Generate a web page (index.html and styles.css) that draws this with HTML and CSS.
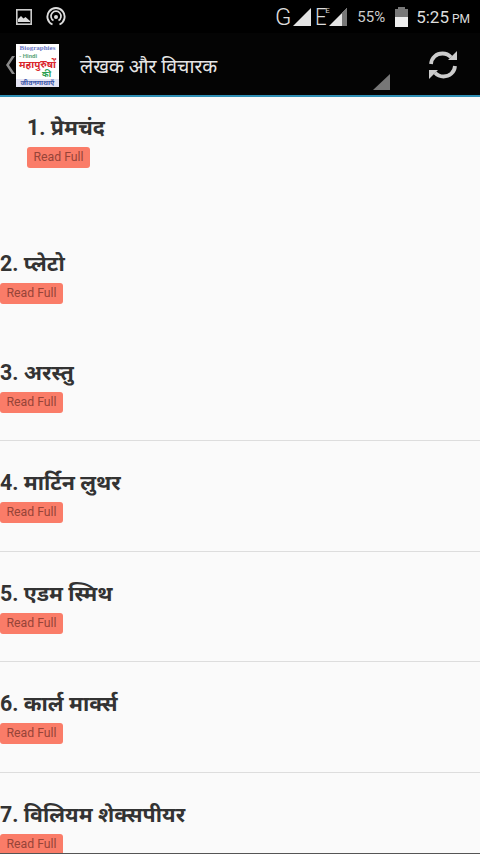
FILE: index.html
```html
<!DOCTYPE html>
<html lang="hi">
<head>
<meta charset="utf-8">
<title>लेखक और विचारक</title>
<link rel="stylesheet" href="styles.css">
</head>
<body>
<div class="status">
  <div class="status-left">
    <svg class="ic-img" viewBox="0 0 16 16"><rect x="0.8" y="0.8" width="14.4" height="14.4" fill="none" stroke="#ccc" stroke-width="1.6"/><path d="M2 13V10L5 7l2.500 2.500L9.500 8 14 12v1z" fill="#ddd"/></svg>
    <svg class="ic-cast" viewBox="0 0 20 20"><path d="M6.500 17.500a8.600 8.600 0 1 1 7 0" fill="none" stroke="#ddd" stroke-width="1.900"/><path d="M7.500 13.500a5 5 0 1 1 5 0" fill="none" stroke="#ddd" stroke-width="1.700"/><circle cx="10" cy="10" r="2" fill="#ddd"/></svg>
  </div>
  <div class="status-right">
    <span class="net">G</span>
    <svg class="sig" viewBox="0 0 18 18"><path d="M0 18 18 0v18z" fill="#e4e4e4"/></svg>
    <span class="net net-e">E</span>
    <span class="net-sup">E</span>
    <svg class="sig sig-e" viewBox="0 0 18 18"><path d="M0 18 18 0v18z" fill="#e4e4e4"/><path d="M13 5 18 0v18h-5z" fill="#777"/></svg>
    <span class="pct">55%</span>
    <div class="batt"><div class="batt-cap"></div><div class="batt-empty"></div><div class="batt-full"></div></div>
    <span class="clock">5:25<span class="ampm"> PM</span></span>
  </div>
</div>
<header class="bar">
  <svg class="back" viewBox="0 0 10 20"><path d="M7 1h3L4 10l6 9H7L1 10z" fill="#8a8a8a"/></svg>
  <div class="logo">
    <span class="logo-a">Biographies</span>
    <span class="logo-b">- Hindi</span>
    <span class="logo-c">महापुरुषों</span>
    <span class="logo-d">की</span>
    <span class="logo-e">जीवनगाथाएँ</span>
  </div>
  <h1 class="title">लेखक और विचारक</h1>
  <div class="spinner-arrow"></div>
  <svg class="refresh" viewBox="0 0 32 32">
    <path d="M4 15C4.500 8.500 9.500 4.500 15.500 4.500c3.500 0 6.300 1.300 8.500 3.700" fill="none" stroke="#ccc" stroke-width="3.800"/>
    <path d="M21 11h9V2z" fill="#ccc"/>
    <path d="M28 17c-.5 6.500-5.500 10.500-11.500 10.500-3.500 0-6.300-1.300-8.500-3.700" fill="none" stroke="#ccc" stroke-width="3.800"/>
    <path d="M11 21H2v9z" fill="#ccc"/>
  </svg>
</header>
<main class="list">
  <section class="item item-first">
    <h2 class="name">1. प्रेमचंद</h2>
    <a class="btn">Read Full</a>
  </section>
  <section class="item item-second">
    <h2 class="name">2. प्लेटो</h2>
    <a class="btn">Read Full</a>
  </section>
  <section class="item item-third">
    <h2 class="name">3. अरस्तु</h2>
    <a class="btn">Read Full</a>
  </section>
  <section class="item">
    <h2 class="name">4. मार्टिन लुथर</h2>
    <a class="btn">Read Full</a>
  </section>
  <section class="item">
    <h2 class="name">5. एडम स्मिथ</h2>
    <a class="btn">Read Full</a>
  </section>
  <section class="item">
    <h2 class="name">6. कार्ल मार्क्स</h2>
    <a class="btn">Read Full</a>
  </section>
  <section class="item">
    <h2 class="name">7. विलियम शेक्सपीयर</h2>
    <a class="btn">Read Full</a>
  </section>
</main>
</body>
</html>
```

FILE: styles.css
```css
* { box-sizing: border-box; }
html, body { margin: 0; padding: 0; }
body {
  width: 480px;
  height: 854px;
  overflow: hidden;
  background: #fafafa;
  font-family: Roboto, "Noto Sans", "Noto Sans Devanagari", "Lohit Devanagari", sans-serif;
  border-bottom: 1px solid #555;
}
.status {
  height: 33px;
  background: #000;
  display: flex;
  justify-content: space-between;
  align-items: center;
  color: #ddd;
  padding: 0 10px 0 16px;
}
.status-left { display: flex; align-items: center; gap: 14px; }
.ic-img { width: 16px; height: 16px; }
.ic-cast { width: 20px; height: 20px; }
.status-right { display: flex; align-items: center; }
.net { font-size: 24px; line-height: 26px; font-weight: 300; color: #ddd; }
.net-e { margin-left: 4px; width: 10px; transform: scaleX(.85); transform-origin: left center; }
.net-sup { font-size: 8px; line-height: 9px; width: 4px; margin-bottom: 12px; color: #ddd; }
.sig { width: 18px; height: 18px; margin-left: 2px; }
.sig-e { margin-left: 0; }
.pct { font-size: 15px; margin-left: 10px; color: #ccc; }
.batt { width: 13px; height: 20px; margin-left: 10px; display: flex; flex-direction: column; align-items: center; }
.batt-cap { width: 7px; height: 2px; background: #777; }
.batt-empty { width: 13px; height: 8px; background: #777; }
.batt-full { width: 13px; height: 10px; background: #eee; }
.clock { font-size: 17px; margin-left: 8px; color: #ddd; }
.ampm { font-size: 12px; }
.bar {
  height: 64px;
  background: #040404;
  border-bottom: 2px solid #2f8fb5;
  display: flex;
  align-items: center;
  padding-top: 2px;
  position: relative;
}
.back { width: 10px; height: 20px; margin: 0 1px 0 5px; }
.logo {
  width: 43px;
  height: 43px;
  background: #fff;
  display: flex;
  flex-direction: column;
  align-items: center;
  overflow: hidden;
  white-space: nowrap;
  font-weight: 700;
}
.logo-a { color: #6a78c8; font-family: "Liberation Serif", serif; font-size: 7px; line-height: 8px; }
.logo-b { color: #5aa57a; font-size: 6px; line-height: 7px; align-self: flex-start; margin-left: 3px; }
.logo-c { color: #d9262c; font-size: 10px; line-height: 12px; }
.logo-d { color: #2aa050; font-size: 8px; line-height: 8px; align-self: flex-end; margin-right: 8px; }
.logo-e { color: #3a55a8; background: #e4e4f4; width: 100%; text-align: center; font-size: 7px; line-height: 8px; }
.title {
  margin: 0 0 0 21px;
  flex: 1;
  font-size: 19.400px;
  font-weight: 400;
  color: #e6e6e6;
}
.spinner-arrow {
  position: absolute;
  left: 373px;
  bottom: 5px;
  width: 17px;
  height: 16px;
  background: #777;
  clip-path: polygon(100% 0, 100% 100%, 0 100%);
}
.refresh { width: 32px; height: 32px; margin-right: 21px; }
.list { display: block; }
.name {
  margin: 0 0 4px;
  font-size: 21.400px;
  line-height: 30px;
  font-weight: 700;
  color: #333;
}
.btn {
  display: block;
  width: 63px;
  height: 21px;
  background: #fa7c68;
  border-radius: 3px;
  color: #964438;
  font-size: 12.300px;
  line-height: 21px;
  text-align: center;
}
.item { height: 110.700px; padding-top: 27px; border-top: 1px solid #ddd; }
.item-first { height: 136px; padding: 16px 0 0 27px; border-top: 0; }
.item-second { height: 108px; padding-top: 16px; border-top: 0; }
.item-third { height: 99px; padding-top: 17px; border-top: 0; }
```
